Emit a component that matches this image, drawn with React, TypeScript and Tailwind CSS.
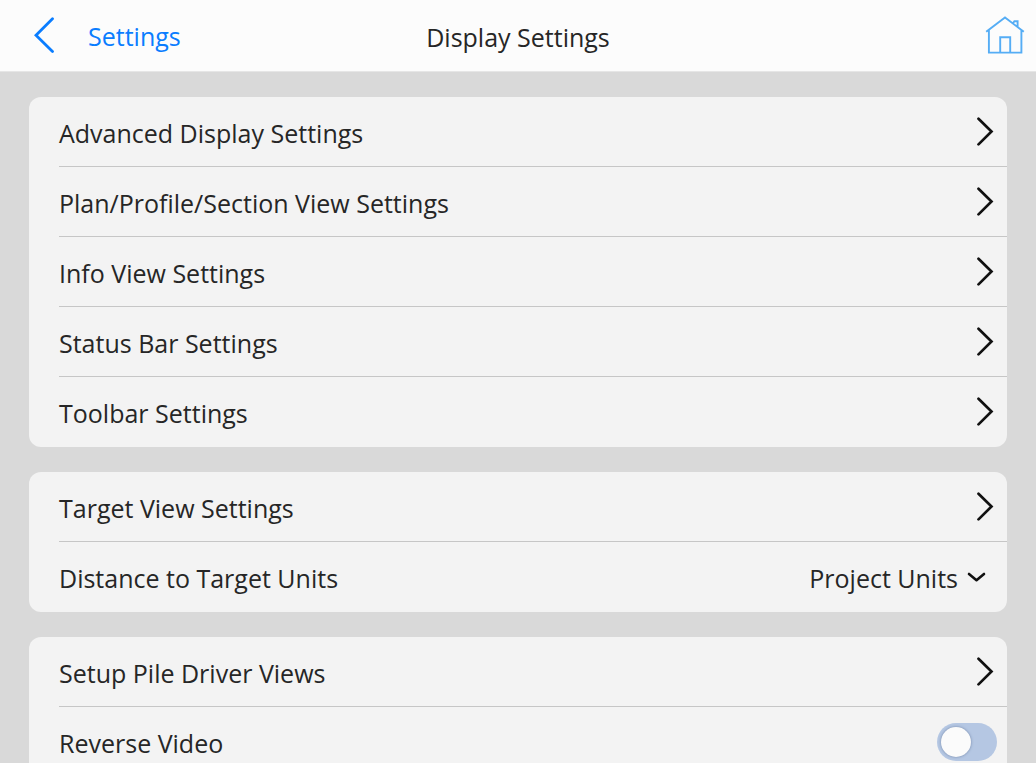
import React, { useState } from 'react';

type RowProps = {
  label: string;
  htmlFor?: string;
  last?: boolean;
  children: React.ReactNode;
};

const units = ['Project Units', 'Meters', 'Feet'];

const ChevronRight = () => (
  <svg width="18" height="30" viewBox="0 0 18 30" fill="none" stroke="#111111" strokeWidth="2.7" strokeLinecap="round" aria-hidden="true">
    <path d="M2.5 1.8 15.5 14.5 2.5 27.4" />
  </svg>
);

const Card = ({ children }: { children: React.ReactNode }) => (
  <ul className="rounded-xl bg-[#f3f3f3] pl-[30px] overflow-hidden">{children}</ul>
);

const LinkRow = ({ label, last }: { label: string; last?: boolean }) => (
  <li className={last ? '' : 'border-b border-[#c6c6c6]'}>
    <a href="#" className={`flex items-center justify-between pr-[13px] ${last ? 'h-[70px]' : 'h-[69px]'}`}>
      <span className="pt-0.5">{label}</span>
      <ChevronRight />
    </a>
  </li>
);

const ControlRow = ({ label, htmlFor, last, children }: RowProps) => (
  <li className={`flex items-center justify-between ${last ? 'h-[70px]' : 'h-[70px] border-b border-[#c6c6c6]'}`}>
    <label htmlFor={htmlFor} className="pt-0.5">{label}</label>
    {children}
  </li>
);

const App = () => {
  const [unit, setUnit] = useState(units[0]);
  const [reverse, setReverse] = useState(false);

  return (
    <div className="flex h-screen flex-col bg-[#d9d9d9] font-['Open_Sans',sans-serif] text-[25px] leading-8 text-[#262626]">
      <header className="grid h-[72px] shrink-0 grid-cols-[1fr_auto_1fr] items-center border-b border-[#e6e6e6] bg-[#fcfcfc]">
        <a href="#" className="flex items-center gap-[33px] pl-[33px] text-[#0a7dff]">
          <svg width="22" height="38" viewBox="0 0 22 38" fill="none" stroke="currentColor" strokeWidth="2.8" strokeLinecap="round" aria-hidden="true">
            <path d="M19.5 1.8 3 18.2 19.5 34.6" />
          </svg>
          <span>Settings</span>
        </a>
        <h1 className="pt-0.5">Display Settings</h1>
        <a href="#" aria-label="Home" className="justify-self-end pr-[11px]">
          <svg width="40" height="40" viewBox="0 0 40 40" fill="none" stroke="#55adf5" strokeWidth="1.9" aria-hidden="true">
            <path d="M1.2 15.8 20 1.4 38.8 15.8M3.9 14V36.6H36.4V14M15.2 36.6V21.3H25.2V36.6M28 7.2 29.4 5.3H32.6V10.8" />
          </svg>
        </a>
      </header>

      <main className="flex flex-1 flex-col overflow-y-auto px-[29px] py-[25px] [scrollbar-width:none]">
        <div className="flex flex-col gap-[25px]">
          <Card>
            <LinkRow label="Advanced Display Settings" />
            <LinkRow label="Plan/Profile/Section View Settings" />
            <LinkRow label="Info View Settings" />
            <LinkRow label="Status Bar Settings" />
            <LinkRow label="Toolbar Settings" last />
          </Card>

          <Card>
            <LinkRow label="Target View Settings" />
            <ControlRow label="Distance to Target Units" htmlFor="target-units" last>
              <div className="flex items-center gap-2 pr-[21px]">
                <select
                  id="target-units"
                  value={unit}
                  onChange={(e) => setUnit(e.target.value)}
                  className="appearance-none bg-transparent pt-0.5 [field-sizing:content]"
                >
                  {units.map((u) => (
                    <option key={u}>{u}</option>
                  ))}
                </select>
                <svg width="20" height="12" viewBox="0 0 20 12" fill="none" stroke="#111111" strokeWidth="2.6" strokeLinecap="round" strokeLinejoin="round" className="pointer-events-none" aria-hidden="true">
                  <path d="M3 3 10.5 9.2 18 3" />
                </svg>
              </div>
            </ControlRow>
          </Card>

          <Card>
            <LinkRow label="Setup Pile Driver Views" />
            <ControlRow label="Reverse Video" htmlFor="reverse-video" last>
              <input
                id="reverse-video"
                type="checkbox"
                role="switch"
                checked={reverse}
                onChange={(e) => setReverse(e.target.checked)}
                className="mr-2.5 flex h-[38px] w-[60px] appearance-none items-center rounded-full bg-[#b5c7e3] px-1 before:size-[30px] before:rounded-full before:bg-[#fbfbfb] before:shadow-[0_0_3px_#7186a8] checked:justify-end checked:bg-[#0a7dff]"
              />
            </ControlRow>
          </Card>
        </div>
      </main>
    </div>
  );
};

export default App;
